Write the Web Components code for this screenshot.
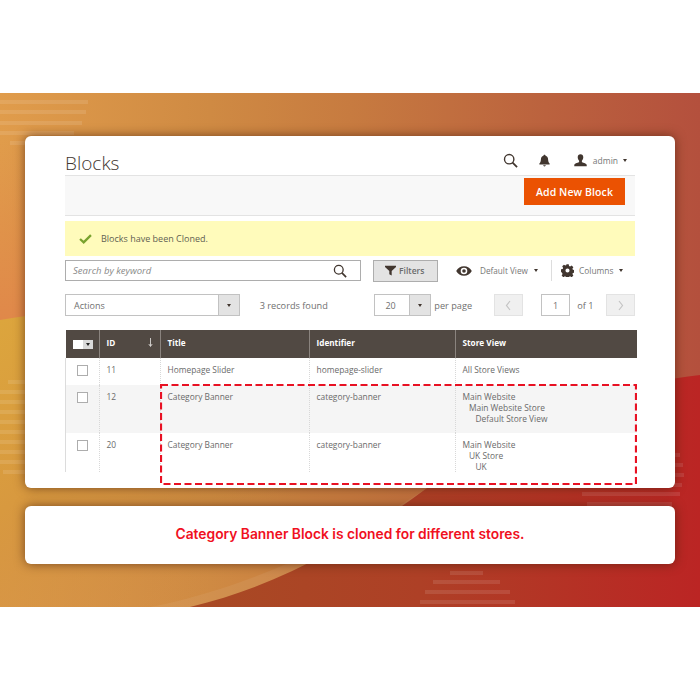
<!DOCTYPE html>
<html>
<head>
<meta charset="utf-8">
<title>Blocks</title>
<style>
    html, body { margin: 0; padding: 0; background: #fff; }
    body { font-family: 'Open Sans', sans-serif; height: 700px; overflow: hidden; }
</style>
</head>
<body>
<promo-band>
    <promo-card style="height: 352px; padding: 0 40px;">
        <admin-header title-text="Blocks" user="admin"></admin-header>
        <action-bar label="Add New Block"></action-bar>
        <notice-bar>Blocks have been Cloned.</notice-bar>
        <grid-toolbar></grid-toolbar>
        <grid-pager></grid-pager>
        <blocks-table></blocks-table>
    </promo-card>
    <promo-card style="height: 58px;">
        <caption-text>Category Banner Block is cloned for different stores.</caption-text>
    </promo-card>
</promo-band>

<script>
const ICONS = {
    search: `<svg viewBox="0 0 16 16" width="100%" height="100%"><circle cx="6.6" cy="6.6" r="5" fill="none" stroke="currentColor" stroke-width="1.5"/><path d="M10.2 10.2 15 15" stroke="currentColor" stroke-width="1.9" fill="none"/></svg>`,
    bell: `<svg viewBox="0 0 12 14" width="100%" height="100%"><path fill="currentColor" d="M6 0.6c.7 0 1.1.5 1.1 1.1 1.9.5 2.7 2 2.8 3.8.1 2 .5 3.5 1.7 4.8v1H.4v-1c1.2-1.3 1.6-2.8 1.7-4.8.1-1.8.9-3.3 2.8-3.8C4.9 1.100 5.300.6 6 .6zM4.600 12.300h2.800c0 .8-.6 1.300-1.400 1.300s-1.400-.5-1.400-1.300z"/></svg>`,
    user: `<svg viewBox="0 0 14 14" width="100%" height="100%"><path fill="currentColor" d="M7 .3c1.900 0 3 1.400 3 3.300 0 1.500-.7 3-1.500 3.700v1.300c.4.500 4.500 1.400 5.200 3v1.700H.3v-1.700c.7-1.600 4.800-2.500 5.200-3V7.300C4.700 6.600 4 5.100 4 3.600 4 1.700 5.100.3 7 .3z"/></svg>`,
    funnel: `<svg viewBox="0 0 12 12" width="100%" height="100%"><path fill="currentColor" d="M0 .8h12v1.300L7.300 6.500v5L4.700 10V6.500L0 2.100z"/></svg>`,
    eye: `<svg viewBox="0 0 16 10" width="100%" height="100%"><path fill="currentColor" fill-rule="evenodd" d="M8 .2c3.400 0 6.200 2 7.800 4.800C14.200 7.800 11.400 9.800 8 9.800S1.800 7.800.2 5C1.800 2.200 4.600.2 8 .2zm0 1.500a3.300 3.300 0 1 0 0 6.600 3.300 3.300 0 0 0 0-6.600zm0 1.500a1.800 1.800 0 1 1 0 3.600 1.800 1.800 0 0 1 0-3.600z"/></svg>`,
    gear: `<svg viewBox="0 0 14 14" width="100%" height="100%"><path fill="currentColor" fill-rule="evenodd" d="M5.700.3h2.600l.4 1.900 1.100.5 1.700-1 1.800 1.800-1 1.700.5 1.100 1.900.4v2.600l-1.900.4-.5 1.100 1 1.700-1.800 1.800-1.700-1-1.100.5-.4 1.900H5.700l-.4-1.900-1.100-.5-1.700 1-1.800-1.800 1-1.700-.5-1.100L-.1 8.300V5.700l1.900-.4.500-1.100-1-1.700 1.800-1.800 1.700 1 1.100-.5zM7 4.800a2.200 2.200 0 1 0 0 4.400 2.200 2.200 0 0 0 0-4.400z"/></svg>`,
    check: `<svg viewBox="0 0 14 11" width="100%" height="100%"><path fill="none" stroke="currentColor" stroke-width="2.500" d="M1 5.500 5 9.200 13 1.200"/></svg>`
};

const caret = (color = '#41362f') => `<u style="display:inline-block;flex:none;width:0;height:0;border:2.6px solid transparent;border-top:3.2px solid ${color};border-bottom:0;"></u>`;

class UiIcon extends HTMLElement {
    connectedCallback() {
        const size = this.getAttribute('w') || 14;
        const h = this.getAttribute('h') || size;
        this.attachShadow({ mode: 'open' });
        this.shadowRoot.innerHTML = `
            <style>:host { display: inline-flex; flex: none; width: ${size}px; height: ${h}px; color: ${this.getAttribute('color') || '#41362f'}; }</style>
            ${ICONS[this.getAttribute('name')]}`;
    }
}
customElements.define('ui-icon', UiIcon);

class PromoBand extends HTMLElement {
    constructor() {
        super();
        this.attachShadow({ mode: 'open' });
        const stripes = (rows) => rows.map(([y, a, b]) => `<rect x="${a}" y="${y}" width="${b - a}" height="4"/>`).join('');
        this.shadowRoot.innerHTML = `
            <style>
                :host {
                    display: flex;
                    flex-direction: column;
                    gap: 18px;
                    box-sizing: border-box;
                    position: relative;
                    margin-top: 93px;
                    height: 514px;
                    padding: 43px 25px 0;
                    overflow: hidden;
                    background: linear-gradient(90deg, #e09c4b 0%, #cf8a43 30%, #c77b40 50%, #bb623e 78%, #b4503d 100%);
                }
                svg { position: absolute; left: 0; top: 0; }
                ::slotted(*) { position: relative; }
            </style>
            <svg width="700" height="514" viewBox="0 93 700 514">
                <defs>
                    <linearGradient id="red" x1="0" x2="1" y1="0" y2="0">
                        <stop offset="0" stop-color="#a84a24"/>
                        <stop offset=".45" stop-color="#ae4026"/>
                        <stop offset="1" stop-color="#bb2524"/>
                    </linearGradient>
                    <linearGradient id="sand" gradientUnits="userSpaceOnUse" x1="0" y1="320" x2="200" y2="607">
                        <stop offset="0" stop-color="#dca53d"/>
                        <stop offset=".45" stop-color="#d8993f"/>
                        <stop offset="1" stop-color="#c98842" stop-opacity="0"/>
                    </linearGradient>
                    <linearGradient id="peach" gradientUnits="userSpaceOnUse" x1="0" y1="140" x2="0" y2="320">
                        <stop offset="0" stop-color="#e08a48" stop-opacity="0"/>
                        <stop offset="1" stop-color="#e0884a"/>
                    </linearGradient>
                </defs>
                <rect x="0" y="140" width="40" height="185" fill="url(#peach)"/>
                <path fill="url(#sand)" d="M0 320 Q60 310 160 300 L300 320 L300 607 L0 607 Z"/>
                <path fill="#fff" opacity=".06" d="M150 607 C240 590 340 545 427 488 L450 488 L400 607 Z"/>
                <path fill="url(#red)" d="M190 607 C280 585 350 545 427 488 C520 420 610 385 700 375 L700 607 Z"/>
                <g fill="#fff" opacity=".1" style="filter: blur(.6px)">
                    ${stripes([[100, 0, 88], [110, 0, 86], [121, 0, 82], [131, 0, 74], [141, 10, 50]])}
                    ${stripes([[380, 8, 26], [390, 0, 26], [400, 0, 26], [410, 0, 26], [420, 0, 26], [430, 0, 26], [440, 0, 26], [450, 0, 26], [460, 0, 26], [470, 3, 26]])}
                    ${stripes([[453, 672, 680], [463, 672, 683], [473, 672, 684], [483, 672, 682], [492, 582, 680], [502, 587, 672]])}
                    ${stripes([[571, 450, 483], [580, 433, 500], [590, 425, 510], [600, 420, 515]])}
                </g>
            </svg>
            <slot></slot>`;
    }
}
customElements.define('promo-band', PromoBand);

class PromoCard extends HTMLElement {
    constructor() {
        super();
        this.attachShadow({ mode: 'open' });
        this.shadowRoot.innerHTML = `
            <style>
                :host {
                    display: flex;
                    flex-direction: column;
                    flex: none;
                    box-sizing: border-box;
                    background: #fff;
                    border-radius: 6px;
                    box-shadow: 0 0 11px rgba(70, 30, 10, .65);
                }
            </style>
            <slot></slot>`;
    }
}
customElements.define('promo-card', PromoCard);

class AdminHeader extends HTMLElement {
    connectedCallback() {
        this.attachShadow({ mode: 'open' });
        this.shadowRoot.innerHTML = `
            <style>
                :host { display: flex; align-items: center; height: 39px; flex: none; }
                h1 { margin: 0; font: 300 19px/1 'Open Sans', sans-serif; color: #41362f; padding-top: 15px; flex: 1; }
                .tools { display: flex; align-items: center; padding-right: 8px; padding-top: 9px; height: 15px; }
                .user { font-size: 8.5px; color: #777; margin: 0 5px 0 6px; }
            </style>
            <h1>${this.getAttribute('title-text')}</h1>
            <div class="tools">
                <ui-icon name="search" w="15"></ui-icon>
                <ui-icon name="bell" w="11" h="13" style="margin-left: 21px;"></ui-icon>
                <ui-icon name="user" w="13" style="margin-left: 24px;"></ui-icon>
                <span class="user">${this.getAttribute('user')}</span>${caret()}
            </div>`;
    }
}
customElements.define('admin-header', AdminHeader);

class ActionBar extends HTMLElement {
    connectedCallback() {
        this.attachShadow({ mode: 'open' });
        this.shadowRoot.innerHTML = `
            <style>
                :host {
                    display: flex;
                    justify-content: flex-end;
                    align-items: flex-start;
                    box-sizing: border-box;
                    height: 41px;
                    flex: none;
                    background: #f8f8f8;
                    border-top: 1px solid #e3e3e3;
                    border-bottom: 1px solid #e3e3e3;
                    padding: 2px 10px 0 0;
                }
                button {
                    width: 101px;
                    height: 27px;
                    padding: 0;
                    border: 0;
                    background: #eb5202;
                    color: #fff;
                    font: 600 10.5px 'Open Sans', sans-serif;
                    letter-spacing: .1px;
                }
            </style>
            <button>${this.getAttribute('label')}</button>`;
    }
}
customElements.define('action-bar', ActionBar);

class NoticeBar extends HTMLElement {
    constructor() {
        super();
        this.attachShadow({ mode: 'open' });
        this.shadowRoot.innerHTML = `
            <style>
                :host {
                    display: flex;
                    align-items: center;
                    gap: 9px;
                    flex: none;
                    height: 35px;
                    margin-top: 5px;
                    padding-left: 14px;
                    background: #fffbbb;
                    font-size: 9px;
                    color: #5f5f52;
                }
            </style>
            <ui-icon name="check" w="13" h="10" color="#79a22e"></ui-icon>
            <span><slot></slot></span>`;
    }
}
customElements.define('notice-bar', NoticeBar);

class GridToolbar extends HTMLElement {
    connectedCallback() {
        this.attachShadow({ mode: 'open' });
        this.shadowRoot.innerHTML = `
            <style>
                :host { display: flex; align-items: center; height: 23px; margin-top: 3px; flex: none; font-size: 8.4px; color: #777; }
                .search {
                    display: flex; align-items: center; justify-content: space-between;
                    box-sizing: border-box; width: 296px; height: 21px;
                    border: 1px solid #adadad; padding: 0 13px 0 7px;
                    font-style: italic; font-size: 9.5px; color: #8a8a8a;
                }
                .filters {
                    display: flex; align-items: center; gap: 3px; box-sizing: border-box;
                    width: 65px; height: 22px; margin-left: 12px; padding-left: 11px;
                    background: #e3e3e3; border: 1px solid #adadad; color: #6b6b6b;
                    font-size: 8.5px; font-weight: 600;
                }
                .view { display: flex; align-items: center; margin-left: 18px; width: 95px; box-sizing: border-box; }
                .view span.t { margin: 0 6px 0 8px; }
                .sep { width: 1px; height: 21px; background: #ddd; }
                .cols { display: flex; align-items: center; margin-left: 9px; }
                .cols span.t { margin: 0 6px 0 5px; }
            </style>
            <div class="search"><span>Search by keyword</span><ui-icon name="search" w="14"></ui-icon></div>
            <div class="filters"><ui-icon name="funnel" w="11" h="11"></ui-icon><span>Filters</span></div>
            <div class="view"><ui-icon name="eye" w="16" h="10"></ui-icon><span class="t" style="font-size: 8.2px;">Default View</span>${caret()}</div>
            <div class="sep"></div>
            <div class="cols"><ui-icon name="gear" w="13" h="13"></ui-icon><span class="t">Columns</span>${caret()}</div>`;
    }
}
customElements.define('grid-toolbar', GridToolbar);

class GridPager extends HTMLElement {
    connectedCallback() {
        this.attachShadow({ mode: 'open' });
        const chevron = (d) => `<svg width="7" height="11" viewBox="0 0 7 11"><path d="${d}" fill="none" stroke="#c4c4c4" stroke-width="1.200"/></svg>`;
        this.shadowRoot.innerHTML = `
            <style>
                :host { display: flex; align-items: center; height: 22px; margin-top: 12px; flex: none; font-size: 9.2px; color: #6f6f6f; }
                .select {
                    display: flex; align-items: stretch; box-sizing: border-box; height: 22px;
                    border: 1px solid #c2c2c2; font-size: 9px;
                }
                .select span { flex: 1; align-self: center; }
                .select i { display: flex; align-items: center; justify-content: center; width: 20px; background: #e3e3e3; border-left: 1px solid #c2c2c2; }
                .actions { width: 175px; }
                .actions span { padding-left: 8px; }
                .count { margin-left: 20px; width: 115px; }
                .size { width: 57px; }
                .size span { padding-left: 10px; }
                .per { margin-left: 3px; width: 60px; }
                .btn { display: flex; align-items: center; justify-content: center; box-sizing: border-box; width: 29px; height: 22px; background: #f0f0f0; border: 1px solid #e3e3e3; }
                .num { display: flex; align-items: center; justify-content: center; box-sizing: border-box; width: 29px; height: 22px; margin-left: 18px; border: 1px solid #c2c2c2; font-size: 9px; }
                .of { margin-left: 7px; width: 29px; }
            </style>
            <div class="select actions"><span>Actions</span><i>${caret()}</i></div>
            <div class="count">3 records found</div>
            <div class="select size"><span>20</span><i>${caret()}</i></div>
            <div class="per">per page</div>
            <div class="btn">${chevron('M5 1 1.500 5.500 5 10')}</div>
            <div class="num">1</div>
            <div class="of">of 1</div>
            <div class="btn">${chevron('M2 1 5.500 5.500 2 10')}</div>`;
    }
}
customElements.define('grid-pager', GridPager);

class BlocksTable extends HTMLElement {
    constructor() {
        super();
        this.attachShadow({ mode: 'open' });
        this.rows = [
            { id: 11, title: 'Homepage Slider', identifier: 'homepage-slider', views: ['All Store Views'], h: 27 },
            { id: 12, title: 'Category Banner', identifier: 'category-banner', views: ['Main Website', 'Main Website Store', 'Default Store View'], h: 48, alt: true },
            { id: 20, title: 'Category Banner', identifier: 'category-banner', views: ['Main Website', 'UK Store', 'UK'], h: 38 }
        ];
    }

    connectedCallback() {
        this.render();
    }

    render() {
        const rowsHtml = this.rows.map(row => `
            <tr class="${row.alt ? 'alt' : ''}" style="height: ${row.h}px;">
                <td class="chk"><span class="box"></span></td>
                <td>${row.id}</td>
                <td>${row.title}</td>
                <td>${row.identifier}</td>
                <td>${row.views.map((v, i) => `<div style="padding-left: ${[0, 6.5, 13][i]}px;">${v}</div>`).join('')}</td>
            </tr>`).join('');

        this.shadowRoot.innerHTML = `
            <style>
                :host { display: block; position: relative; flex: none; width: 571px; margin-top: 14px; }
                table { border-collapse: collapse; table-layout: fixed; width: 571px; font-size: 8.4px; color: #6a6a6a; }
                th {
                    height: 28px; padding: 0 0 3px 6.500px; background: #514943; color: #fff; text-align: left;
                    font-size: 8.2px; font-weight: 700; border-left: 1px solid #8a837e; box-sizing: border-box;
                }
                th:first-child { border-left: 0; padding: 0 0 0 7px; }
                td { padding: 6px 0 0 6.500px; vertical-align: top; line-height: 11px; border-left: 1px dotted #d8d8d8; box-sizing: border-box; }
                td:first-child { border-left: 1px solid #dcdcdc; padding: 7px 0 0 6.500px; }
                tr.alt td { background: #f5f5f5; }
                .box { display: block; box-sizing: border-box; width: 11px; height: 11px; margin-left: 4px; background: #fff; border: 1px solid #adadad; }
                .multi { display: flex; width: 20px; height: 9px; }
                .multi b { width: 10px; background: #fff; }
                .multi i { display: flex; align-items: center; justify-content: center; width: 10px; background: #d9d9d9; }
                .id { display: flex; justify-content: space-between; align-items: center; padding-right: 7px; }
                .frame { position: absolute; left: 95px; top: 54px; }
            </style>
            <table>
                <colgroup><col style="width: 34px"><col style="width: 61px"><col style="width: 149px"><col style="width: 146px"><col style="width: 181px"></colgroup>
                <thead>
                    <tr>
                        <th><div class="multi"><b></b><i>${caret('#222')}</i></div></th>
                        <th><div class="id">ID<svg width="5" height="9" viewBox="0 0 5 9"><path d="M2.500 0V8M.8 6 2.500 8.500 4.200 6" fill="none" stroke="#e8e6e4" stroke-width=".8"/></svg></div></th>
                        <th>Title</th>
                        <th>Identifier</th>
                        <th>Store View</th>
                    </tr>
                </thead>
                <tbody>${rowsHtml}</tbody>
            </table>
            <svg class="frame" width="477" height="102"><rect x="1" y="1" width="475" height="99" fill="none" stroke="#e81123" stroke-width="2.200" stroke-dasharray="7 3.500"/></svg>`;
    }
}
customElements.define('blocks-table', BlocksTable);

class CaptionText extends HTMLElement {
    constructor() {
        super();
        this.attachShadow({ mode: 'open' });
        this.shadowRoot.innerHTML = `
            <style>
                :host {
                    display: flex; align-items: center; justify-content: center; height: 56px;
                    font: 600 13.800px Inter, sans-serif; color: #f0101e;
                }
            </style>
            <slot></slot>`;
    }
}
customElements.define('caption-text', CaptionText);
</script>
</body>
</html>
